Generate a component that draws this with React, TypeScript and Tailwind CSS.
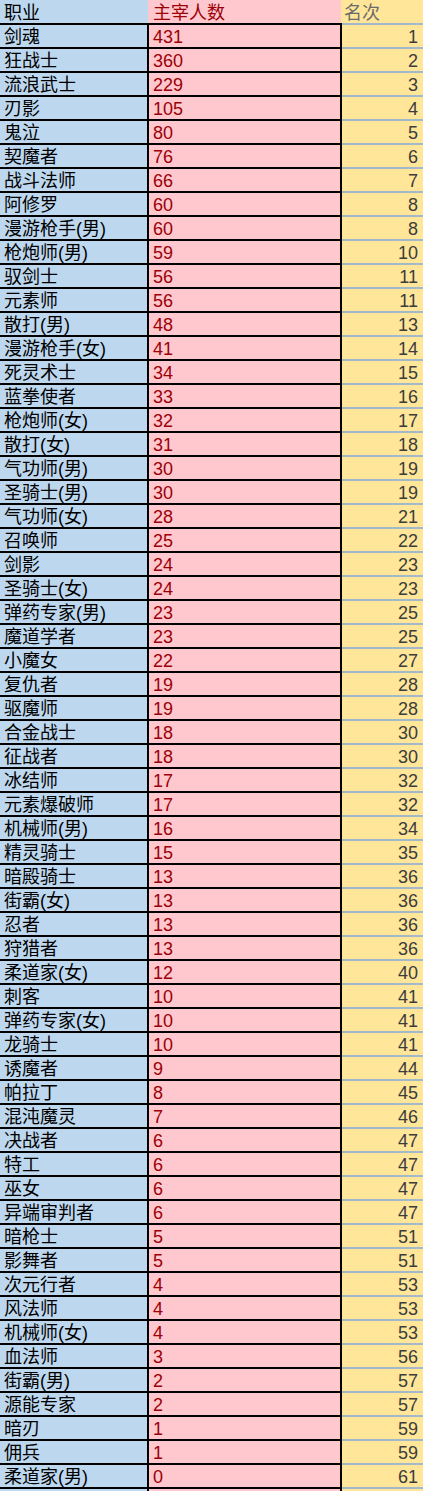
import React from "react";

const data: [string, number, number][] = [
  ["剑魂", 431, 1],
  ["狂战士", 360, 2],
  ["流浪武士", 229, 3],
  ["刃影", 105, 4],
  ["鬼泣", 80, 5],
  ["契魔者", 76, 6],
  ["战斗法师", 66, 7],
  ["阿修罗", 60, 8],
  ["漫游枪手(男)", 60, 8],
  ["枪炮师(男)", 59, 10],
  ["驭剑士", 56, 11],
  ["元素师", 56, 11],
  ["散打(男)", 48, 13],
  ["漫游枪手(女)", 41, 14],
  ["死灵术士", 34, 15],
  ["蓝拳使者", 33, 16],
  ["枪炮师(女)", 32, 17],
  ["散打(女)", 31, 18],
  ["气功师(男)", 30, 19],
  ["圣骑士(男)", 30, 19],
  ["气功师(女)", 28, 21],
  ["召唤师", 25, 22],
  ["剑影", 24, 23],
  ["圣骑士(女)", 24, 23],
  ["弹药专家(男)", 23, 25],
  ["魔道学者", 23, 25],
  ["小魔女", 22, 27],
  ["复仇者", 19, 28],
  ["驱魔师", 19, 28],
  ["合金战士", 18, 30],
  ["征战者", 18, 30],
  ["冰结师", 17, 32],
  ["元素爆破师", 17, 32],
  ["机械师(男)", 16, 34],
  ["精灵骑士", 15, 35],
  ["暗殿骑士", 13, 36],
  ["街霸(女)", 13, 36],
  ["忍者", 13, 36],
  ["狩猎者", 13, 36],
  ["柔道家(女)", 12, 40],
  ["刺客", 10, 41],
  ["弹药专家(女)", 10, 41],
  ["龙骑士", 10, 41],
  ["诱魔者", 9, 44],
  ["帕拉丁", 8, 45],
  ["混沌魔灵", 7, 46],
  ["决战者", 6, 47],
  ["特工", 6, 47],
  ["巫女", 6, 47],
  ["异端审判者", 6, 47],
  ["暗枪士", 5, 51],
  ["影舞者", 5, 51],
  ["次元行者", 4, 53],
  ["风法师", 4, 53],
  ["机械师(女)", 4, 53],
  ["血法师", 3, 56],
  ["街霸(男)", 2, 57],
  ["源能专家", 2, 57],
  ["暗刃", 1, 59],
  ["佣兵", 1, 59],
  ["柔道家(男)", 0, 61],
];

const font = {
  fontFamily: '"Liberation Sans", "Noto Sans CJK SC", sans-serif',
};

export default function App() {
  return (
    <div
      className="w-[423px] h-[1491px] overflow-hidden bg-[#ffe699] text-[18px] leading-none"
      style={font}
    >
      <div className="flex h-[23px]">
        <div className="w-[148px] bg-[#bdd7ee] text-black pl-[4px] pt-[2px] flex items-center">职业</div>
        <div className="w-[193px] bg-[#ffc7ce] text-[#9c0006] pl-[5px] pt-[2px] flex items-center">主宰人数</div>
        <div className="flex-1 bg-[#ffe699] text-[#6b6b6b] pl-[3px] pt-[2px] flex items-center">名次</div>
      </div>
      {data.map(([name, n, rank], i) => (
        <div key={i} className="flex h-[24px]">
          <div className="w-[149px] bg-[#bdd7ee] text-black border-t-2 border-r-2 border-black pl-[4px] pt-[1px] flex items-center">
            {name}
          </div>
          <div className="w-[193px] bg-[#ffc7ce] text-[#9c0006] border-t-2 border-r-2 border-black pl-[4px] pt-[1px] flex items-center">
            {n}
          </div>
          <div className="flex-1 bg-[#ffe699] text-[#3c3c3c] border-t-2 border-[#a3b9c9] pr-[5px] pt-[1px] flex items-center justify-end">
            {rank}
          </div>
        </div>
      ))}
      <div className="flex h-[4px]">
        <div className="w-[149px] bg-[#bdd7ee] border-t-2 border-r-2 border-black"></div>
        <div className="w-[193px] bg-[#ffc7ce] border-t-2 border-r-2 border-black"></div>
        <div className="flex-1 bg-[#ffe699] border-t-2 border-[#a3b9c9]"></div>
      </div>
    </div>
  );
}
